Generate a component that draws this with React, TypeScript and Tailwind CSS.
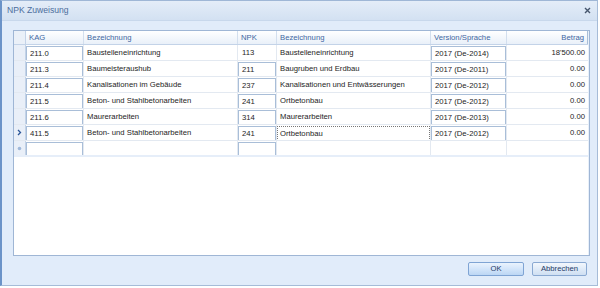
import React from "react";

type Row = {
  kag: string;
  bez: string;
  npk: string;
  npkBox: boolean;
  bez2: string;
  version: string;
  betrag: string;
  current?: boolean;
};

const rows: Row[] = [
  { kag: "211.0", bez: "Baustelleneinrichtung", npk: "113", npkBox: false, bez2: "Baustelleneinrichtung", version: "2017 (De-2014)", betrag: "18'500.00" },
  { kag: "211.3", bez: "Baumeisteraushub", npk: "211", npkBox: true, bez2: "Baugruben und Erdbau", version: "2017 (De-2011)", betrag: "0.00" },
  { kag: "211.4", bez: "Kanalisationen im Gebäude", npk: "237", npkBox: true, bez2: "Kanalisationen und Entwässerungen", version: "2017 (De-2012)", betrag: "0.00" },
  { kag: "211.5", bez: "Beton- und Stahlbetonarbeiten", npk: "241", npkBox: true, bez2: "Ortbetonbau", version: "2017 (De-2012)", betrag: "0.00" },
  { kag: "211.6", bez: "Maurerarbeiten", npk: "314", npkBox: true, bez2: "Maurerarbeiten", version: "2017 (De-2013)", betrag: "0.00" },
  { kag: "411.5", bez: "Beton- und Stahlbetonarbeiten", npk: "241", npkBox: true, bez2: "Ortbetonbau", version: "2017 (De-2012)", betrag: "0.00", current: true },
];

// editor box inside a cell
const Box = ({ children }: { children?: React.ReactNode }) => (
  <div className="mt-[1px] h-[15px] w-full border border-[#a9bed8] bg-white pl-[3px] leading-[13px] truncate">
    {children}
  </div>
);

const Cell = ({
  w,
  children,
  right,
  last,
}: {
  w: string;
  children?: React.ReactNode;
  right?: boolean;
  last?: boolean;
}) => (
  <div
    className={`${w} h-full shrink-0 ${last ? "" : "border-r border-[#e3e9f1]"} ${
      right ? "text-right pr-[3px]" : ""
    } leading-[15px] whitespace-nowrap overflow-hidden`}
  >
    {children}
  </div>
);

const Header = () => (
  <div className="flex h-[14px] border-b border-[#c3d3e8] bg-gradient-to-b from-[#ffffff] to-[#e9f0f9] text-[#3f67a2]">
    <div className="w-[12px] shrink-0 border-r border-[#c3d3e8] bg-[#eaf0f8]" />
    <div className="w-[58px] shrink-0 border-r border-[#d3dfee] pl-[3px] leading-[13px]">KAG</div>
    <div className="w-[154px] shrink-0 border-r border-[#d3dfee] pl-[3px] leading-[13px]">Bezeichnung</div>
    <div className="w-[39px] shrink-0 border-r border-[#d3dfee] pl-[3px] leading-[13px]">NPK</div>
    <div className="w-[154px] shrink-0 border-r border-[#d3dfee] pl-[3px] leading-[13px]">Bezeichnung</div>
    <div className="w-[76px] shrink-0 border-r border-[#d3dfee] pl-[3px] leading-[13px]">Version/Sprache</div>
    <div className="w-[81px] shrink-0 border-r border-[#a9bed8] pr-[3px] text-right leading-[13px]">Betrag</div>
  </div>
);

const DataRow = ({ r }: { r: Row }) => (
  <div className="flex h-[16px] border-b border-[#e3e9f1] text-[#1d1d1d]">
    <div className="flex w-[12px] shrink-0 items-center justify-center border-r border-[#c3d3e8] bg-[#e9eff8] text-[#2c4f86]">
      {r.current && (
        <svg width="5" height="7" viewBox="0 0 5 7">
          <path d="M1 1 L3.5 3.5 L1 6" fill="none" stroke="#2b5597" strokeWidth="1.3" />
        </svg>
      )}
    </div>
    <Cell w="w-[58px]">
      <Box>{r.kag}</Box>
    </Cell>
    <Cell w="w-[154px]">
      <span className="pl-[3px]">{r.bez}</span>
    </Cell>
    <Cell w="w-[39px]">
      {r.npkBox ? <Box>{r.npk}</Box> : <span className="pl-[4px]">{r.npk}</span>}
    </Cell>
    <Cell w="w-[154px]">
      {r.current ? (
        <div className="mt-[1px] h-[15px] border border-dotted border-[#777] pl-[2px] leading-[13px]">
          {r.bez2}
        </div>
      ) : (
        <span className="pl-[3px]">{r.bez2}</span>
      )}
    </Cell>
    <Cell w="w-[76px]">
      <Box>{r.version}</Box>
    </Cell>
    <Cell w="w-[81px]" right last>
      {r.betrag}
    </Cell>
  </div>
);

const NewRow = () => (
  <div className="flex h-[16px] border-b-2 border-[#e6eef9]">
    <div className="flex w-[12px] shrink-0 items-center justify-center border-r border-[#c3d3e8] bg-[#e9eff8]">
      <svg width="5" height="5" viewBox="0 0 5 5">
        <circle cx="2.5" cy="2.5" r="1.8" fill="#9fb8da" />
      </svg>
    </div>
    <Cell w="w-[58px]">
      <Box />
    </Cell>
    <Cell w="w-[154px]" />
    <Cell w="w-[39px]">
      <Box />
    </Cell>
    <Cell w="w-[154px]" />
    <Cell w="w-[76px]" />
    <Cell w="w-[81px]" last />
  </div>
);

const Button = ({ label, primary }: { label: string; primary?: boolean }) => (
  <button
    className={`h-[14px] rounded-[2px] border text-[7.7px] leading-[12px] text-[#1f3b66] ${
      primary
        ? "w-[56px] border-[#7fa4d4] bg-gradient-to-b from-[#eaf3fd] via-[#d3e5fa] to-[#bcd6f4]"
        : "w-[55px] border-[#8aa9d2] bg-gradient-to-b from-[#f3f7fc] via-[#e0ebf8] to-[#cfdff2]"
    }`}
  >
    {label}
  </button>
);

export default function App() {
  return (
    <div className="h-[288px] w-[600px] bg-white font-['Liberation_Sans',Arial,sans-serif] text-[7.7px]">
      <div className="flex h-[286px] w-[598px] flex-col border-l-2 border-r border-b border-t border-l-[#6b93c8] border-r-[#a6bcd8] border-b-[#a6bcd8] border-t-[#9fb7d6] bg-[#e1ecfa]">
        {/* title bar */}
        <div className="flex h-[20px] shrink-0 items-center justify-between border-b border-[#c8d8ec] bg-gradient-to-b from-[#e4edf8] to-[#d3e1f2] pl-[5px] pr-[6px]">
          <span className="text-[8.6px] text-[#4c6d9c]">NPK Zuweisung</span>
          <svg width="7" height="7" viewBox="0 0 7 7">
            <path d="M1 1 L6 6 M6 1 L1 6" stroke="#46566d" strokeWidth="1.4" />
          </svg>
        </div>

        {/* grid */}
        <div className="ml-[11px] mt-[9px] h-[226px] w-[577px] border border-[#9fb6d5] bg-white">
          <div className="flex h-full">
            <div className="flex flex-col">
              <Header />
              {rows.map((r, i) => (
                <DataRow key={i} r={r} />
              ))}
              <NewRow />
              <div className="flex flex-1">
                <div className="w-[12px] shrink-0" />
              </div>
            </div>
            <div className="flex-1 bg-[#e8f0fa]" />
          </div>
        </div>

        {/* buttons */}
        <div className="mt-[6px] flex justify-end gap-[8px] pr-[10px]">
          <Button label="OK" primary />
          <Button label="Abbrechen" />
        </div>
      </div>
    </div>
  );
}
